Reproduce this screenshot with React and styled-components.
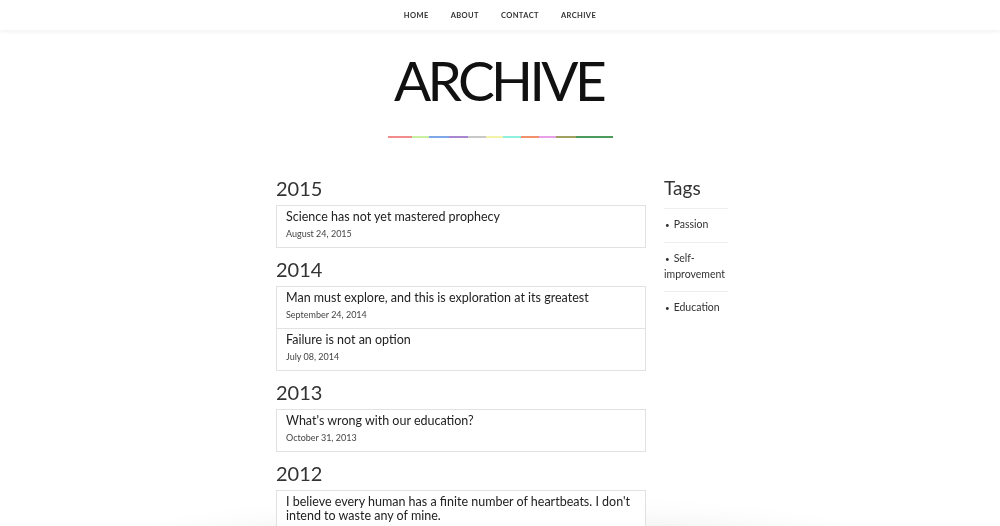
import React from 'react';
import styled, { createGlobalStyle } from 'styled-components';

const GlobalStyle = createGlobalStyle`
	html {
		background: #fff;
	}
	html, body {
		margin: 0;
		padding: 0;
	}
	body {
		font-family: Lato, 'Liberation Sans', sans-serif;
		color: #333;
		overflow: hidden;
	}
	* {
		box-sizing: border-box;
	}
`;

const NavBar = styled.nav`
	position: relative;
	height: 30px;
	display: flex;
	justify-content: center;
	align-items: center;
	gap: 22px;
	background: #fff;
	box-shadow: 0 2px 4px rgba(0, 0, 0, 0.05);
`;

const NavLink = styled.a`
	font-size: 7.5px;
	font-weight: 700;
	letter-spacing: 0.4px;
	color: #333;
	text-decoration: none;
	text-transform: uppercase;
`;

const Header = styled.header`
	display: flex;
	flex-direction: column;
	align-items: center;
	padding-top: 20px;
`;

const Title = styled.h1`
	margin: 0;
	font-size: 55px;
	font-weight: 400;
	line-height: 60px;
	color: #111;
	letter-spacing: -3.6px;
	padding-right: 3px;
`;

const Rainbow = styled.div`
	display: flex;
	width: 225px;
	height: 2px;
	margin-top: 26px;
`;

const Stripe = styled.span`
	width: ${(p) => p.w}px;
	background: ${(p) => p.c};
`;

const Layout = styled.div`
	display: grid;
	grid-template-columns: 370px 64px;
	column-gap: 18px;
	justify-content: center;
	padding-left: 4px;
	margin-top: 38px;
`;

const Main = styled.main`
	display: flex;
	flex-direction: column;
`;

const YearSection = styled.section`
	& + & {
		margin-top: 9px;
	}
`;

const YearTitle = styled.h2`
	margin: 0 0 5px;
	font-size: 20px;
	font-weight: 400;
	line-height: 24px;
	color: #333;
`;

const PostList = styled.ul`
	list-style: none;
	margin: 0;
	padding: 0;
	border: 1px solid #e2e2e2;
	background: #fff;
`;

const Post = styled.li`
	padding: 4px 9px 7px;
	& + & {
		border-top: 1px solid #e2e2e2;
	}
`;

const PostTitle = styled.a`
	display: block;
	font-size: 12.5px;
	line-height: 14px;
	color: #222;
	text-decoration: none;
`;

const PostDate = styled.div`
	font-size: 9px;
	line-height: 13px;
	margin-top: 3px;
	color: #444;
`;

const Sidebar = styled.aside`
	display: flex;
	flex-direction: column;
`;

const TagsTitle = styled.h3`
	margin: 0 0 8px;
	font-size: 19px;
	font-weight: 400;
	line-height: 24px;
	color: #333;
`;

const TagList = styled.ul`
	list-style: none;
	margin: 0;
	padding: 0;
`;

const Tag = styled.li`
	border-top: 1px solid #eee;
	padding: 8px 0 9px;
	font-size: 10.5px;
	line-height: 15px;
	color: #333;
	&::before {
		content: '•';
		margin: 0 4px 0 1px;
		font-size: 8px;
	}
`;

const BottomShadow = styled.div`
	position: fixed;
	left: 150px;
	right: 150px;
	top: 545px;
	height: 60px;
	border-radius: 50%;
	box-shadow: 0 0 40px 12px rgba(0, 0, 0, 0.14);
	z-index: -1;
`;

const stripes = [
	['#f08c8c', 24],
	['#c9f0a0', 17],
	['#7fa8e8', 20],
	['#a987d0', 19],
	['#c8c8c8', 18],
	['#f2f2a8', 17],
	['#8ff0e0', 18],
	['#f0906c', 18],
	['#e8a0e8', 17],
	['#a0a060', 20],
	['#4c9a5c', 37],
];

const archive = [
	{ year: 2015, posts: [{ title: 'Science has not yet mastered prophecy', date: 'August 24, 2015' }] },
	{
		year: 2014,
		posts: [
			{ title: 'Man must explore, and this is exploration at its greatest', date: 'September 24, 2014' },
			{ title: 'Failure is not an option', date: 'July 08, 2014' },
		],
	},
	{ year: 2013, posts: [{ title: "What's wrong with our education?", date: 'October 31, 2013' }] },
	{
		year: 2012,
		posts: [
			{
				title: "I believe every human has a finite number of heartbeats. I don't intend to waste any of mine.",
				date: 'May 02, 2012',
			},
		],
	},
];

const tags = ['Passion', 'Self-improvement', 'Education'];

const App = () => {
	return (
		<>
			<GlobalStyle />
			<BottomShadow />
			<NavBar>
				<NavLink href="#">Home</NavLink>
				<NavLink href="#">About</NavLink>
				<NavLink href="#">Contact</NavLink>
				<NavLink href="#">Archive</NavLink>
			</NavBar>
			<Header>
				<Title>ARCHIVE</Title>
				<Rainbow>
					{stripes.map(([c, w], i) => (
						<Stripe key={i} c={c} w={w} />
					))}
				</Rainbow>
			</Header>
			<Layout>
				<Main>
					{archive.map((group) => (
						<YearSection key={group.year}>
							<YearTitle>{group.year}</YearTitle>
							<PostList>
								{group.posts.map((post) => (
									<Post key={post.title}>
										<PostTitle href="#">{post.title}</PostTitle>
										<PostDate>{post.date}</PostDate>
									</Post>
								))}
							</PostList>
						</YearSection>
					))}
				</Main>
				<Sidebar>
					<TagsTitle>Tags</TagsTitle>
					<TagList>
						{tags.map((tag) => (
							<Tag key={tag}>{tag}</Tag>
						))}
					</TagList>
				</Sidebar>
			</Layout>
		</>
	);
};

export default App;
